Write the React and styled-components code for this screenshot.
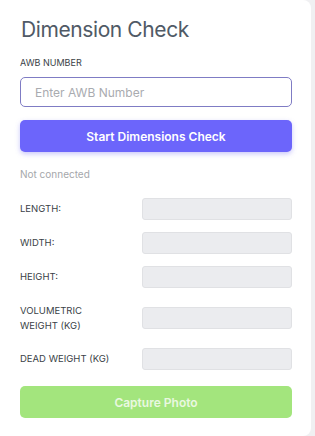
import React from "react";
import styled, { createGlobalStyle } from "styled-components";

const Global = createGlobalStyle`
  html, body { margin: 0; padding: 0; background: #f0f0f2; }
  body { font-family: Inter, "Noto Sans", sans-serif; }
  * { box-sizing: border-box; }
`;

const Card = styled.div`
  width: 311px;
  min-height: 436px;
  background: #ffffff;
  border-radius: 0 8px 8px 0;
  padding: 16px 19px 16px 20px;
  display: flex;
  flex-direction: column;
`;

const Title = styled.h1`
  margin: 0;
  padding-left: 1px;
  font-size: 21px;
  letter-spacing: -0.4px;
  font-weight: 400;
  color: #505a66;
  line-height: 28px;
`;

const FieldLabel = styled.label`
  margin-top: 13px;
  font-size: 9px;
  color: #3a3f47;
  line-height: 12px;
`;

const TextInput = styled.input`
  margin-top: 8px;
  height: 30px;
  width: 100%;
  border: 1px solid #7f7cc4;
  border-radius: 5px;
  padding: 0 14px;
  font-family: inherit;
  font-size: 12px;
  color: #333;
  outline: none;
  &::placeholder { color: #a9abb0; }
`;

const Button = styled.button`
  margin-top: ${p => p.$mt}px;
  height: 32px;
  width: 100%;
  border: none;
  border-radius: 5px;
  background: ${p => p.$bg};
  color: ${p => p.$fg};
  font-family: inherit;
  font-size: 12px;
  font-weight: 600;
  box-shadow: ${p => p.$shadow ? "0 2px 5px rgba(100, 95, 240, 0.35)" : "none"};
`;

const Status = styled.div`
  margin-top: 15px;
  font-size: 10px;
  color: #a5a7ab;
  line-height: 14px;
`;

const Rows = styled.div`
  margin-top: 17px;
  display: flex;
  flex-direction: column;
  gap: 12px;
`;

const Row = styled.div`
  display: grid;
  grid-template-columns: 122px 1fr;
  align-items: center;
  min-height: 22px;
`;

const RowLabel = styled.span`
  font-size: 9.5px;
  color: #3a3f47;
  line-height: ${p => p.$tall ? "15px" : "12px"};
  padding: ${p => p.$tall ? "3px 0" : "0"};
  text-transform: uppercase;
`;

const ValueBox = styled.div`
  height: 22px;
  background: #ebecef;
  border: 1px solid #e0e1e4;
  border-radius: 3px;
`;

const fields = [
  { label: "LENGTH:" },
  { label: "WIDTH:" },
  { label: "HEIGHT:" },
  { label: ["VOLUMETRIC", "WEIGHT (KG)"], tall: true },
  { label: "DEAD WEIGHT (KG)" },
];

export default function App() {
  return (
    <>
      <Global />
      <Card>
        <Title>Dimension Check</Title>
        <FieldLabel>AWB NUMBER</FieldLabel>
        <TextInput placeholder="Enter AWB Number" />
        <Button $mt={13} $bg="#6c65fb" $fg="#ffffff" $shadow>Start Dimensions Check</Button>
        <Status>Not connected</Status>
        <Rows>
          {fields.map((f, i) => (
            <Row key={i}>
              <RowLabel $tall={f.tall}>
                {Array.isArray(f.label) ? (<>{f.label[0]}<br />{f.label[1]}</>) : f.label}
              </RowLabel>
              <ValueBox />
            </Row>
          ))}
        </Rows>
        <Button $mt={16} $bg="#a3e57d" $fg="#e9f8e0">Capture Photo</Button>
      </Card>
    </>
  );
}
